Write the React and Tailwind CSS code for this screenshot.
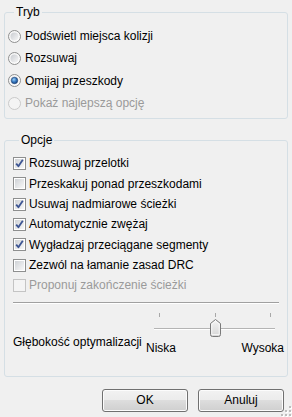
import { useState } from "react";

// Radio 13x13 w stylu Win7
function Radio({ checked, disabled }) {
  return (
    <svg width="13" height="13" viewBox="0 0 13 13" className="shrink-0">
      <defs>
        <linearGradient id="rOuter" x1="0" y1="0" x2="1" y2="1">
          <stop offset="0" stopColor="#f4f4f4" />
          <stop offset="1" stopColor="#ffffff" />
        </linearGradient>
        <linearGradient id="rInner" x1="0" y1="0" x2="1" y2="1">
          <stop offset="0" stopColor="#c9ccd1" />
          <stop offset="1" stopColor="#f7f7f7" />
        </linearGradient>
        <radialGradient id="rDot" cx="0.4" cy="0.35" r="0.7">
          <stop offset="0" stopColor="#9fd3f7" />
          <stop offset="0.5" stopColor="#3b7dc4" />
          <stop offset="1" stopColor="#15407c" />
        </radialGradient>
      </defs>
      <circle
        cx="6.5"
        cy="6.5"
        r="6"
        fill={disabled ? "#f4f4f4" : "url(#rOuter)"}
        stroke={disabled ? "#c9c9c9" : "#8e8f8f"}
      />
      {!disabled && <circle cx="6.5" cy="6.5" r="4" fill="url(#rInner)" />}
      {checked && <circle cx="6.5" cy="6.5" r="3.2" fill="url(#rDot)" stroke="#1b3f73" strokeWidth="0.6" />}
    </svg>
  );
}

function Check({ checked, disabled }) {
  return (
    <svg width="13" height="13" viewBox="0 0 13 13" className="shrink-0">
      <defs>
        <linearGradient id="cInner" x1="0" y1="0" x2="1" y2="1">
          <stop offset="0" stopColor="#cfd2d6" />
          <stop offset="1" stopColor="#f8f8f8" />
        </linearGradient>
      </defs>
      <rect
        x="0.5"
        y="0.5"
        width="12"
        height="12"
        fill={disabled ? "#f4f4f4" : "#ffffff"}
        stroke={disabled ? "#c4c4c4" : "#8e8f8f"}
      />
      {!disabled && <rect x="2" y="2" width="9" height="9" fill="url(#cInner)" />}
      {checked && (
        <path
          d="M3.2 6.6 L5.4 9.2 L9.8 2.8"
          fill="none"
          stroke="#3d5593"
          strokeWidth="1.8"
          strokeLinejoin="round"
        />
      )}
    </svg>
  );
}

function Button({ children }) {
  return (
    <button className="w-[86px] h-[23px] rounded-[3px] border border-[#707070] bg-[linear-gradient(to_bottom,#f2f2f2_0%,#ebebeb_50%,#dddddd_50%,#cfcfcf_100%)] shadow-[inset_0_0_0_1px_#fcfcfc] text-black">
      {children}
    </button>
  );
}

export default function App() {
  const [mode, setMode] = useState(2);
  const modes = ["Podświetl miejsca kolizji", "Rozsuwaj", "Omijaj przeszkody", "Pokaż najlepszą opcję"];
  const opts = [
    { label: "Rozsuwaj przelotki", on: true },
    { label: "Przeskakuj ponad przeszkodami", on: false },
    { label: "Usuwaj nadmiarowe ścieżki", on: true },
    { label: "Automatycznie zwężaj", on: true },
    { label: "Wygładzaj przeciągane segmenty", on: true },
    { label: "Zezwól na łamanie zasad DRC", on: false },
    { label: "Proponuj zakończenie ścieżki", on: false, disabled: true },
  ];

  return (
    <div className="w-[292px] h-[417px] bg-[#f0f0f0] relative overflow-hidden font-['Liberation_Sans',sans-serif] text-[12px] leading-[16px] text-black">
      <div className="pt-[4px] pl-[4px]">
        {/* TRYB */}
        <fieldset className="w-[284px] border border-[#d5dfe5] rounded-[3px] pt-[5px] pb-[4px] pl-[3px]">
          <legend className="ml-[6px] px-[2px]">Tryb</legend>
          {modes.map((m, i) => (
            <div
              key={m}
              onClick={() => i < 3 && setMode(i)}
              className="h-[22.33px] flex items-center gap-[4px]"
            >
              <Radio checked={mode === i} disabled={i === 3} />
              <span className={i === 3 ? "text-[#9a9a9a]" : ""}>{m}</span>
            </div>
          ))}
        </fieldset>

        {/* OPCJE */}
        <fieldset className="w-[284px] mt-[13px] border border-[#d5dfe5] rounded-[3px] pt-[5px] pb-[20px] px-[8px]">
          <legend className="ml-[6px] px-[2px]">Opcje</legend>
          {opts.map((o) => (
            <div key={o.label} className="h-[20.33px] flex items-center gap-[3px]">
              <Check checked={o.on} disabled={o.disabled} />
              <span className={o.disabled ? "text-[#9a9a9a]" : ""}>{o.label}</span>
            </div>
          ))}

          <div className="mt-[6px] h-[2px] border-t border-[#a0a0a0] border-b border-b-white" />

          <div className="mt-[8px] flex -mr-[5px]">
            <div className="flex-1 mt-[22px]">Głębokość optymalizacji</div>
            <div className="w-[138px]">
              <svg width="138" height="26" viewBox="0 0 138 26">
                <defs>
                  <linearGradient id="thumb" x1="0" y1="0" x2="0" y2="1">
                    <stop offset="0" stopColor="#f5f5f5" />
                    <stop offset="1" stopColor="#d6d6d6" />
                  </linearGradient>
                </defs>
                <line x1="13.5" y1="1" x2="13.5" y2="5" stroke="#a8a8a8" />
                <line x1="69.5" y1="1" x2="69.5" y2="5" stroke="#a8a8a8" />
                <line x1="124.5" y1="1" x2="124.5" y2="5" stroke="#a8a8a8" />
                <line x1="8" y1="16.5" x2="129" y2="16.5" stroke="#b4b4b4" />
                <line x1="8" y1="17.5" x2="129" y2="17.5" stroke="#ffffff" />
                <path
                  d="M64.5 11.5 L69.5 7.5 L74.5 11.5 V22.5 Q74.5 24.5 72.5 24.5 H66.5 Q64.5 24.5 64.5 22.5 Z"
                  fill="url(#thumb)"
                  stroke="#7a7a7a"
                />
                <path d="M65.8 12 L69.5 9 L73.2 12 V22.5 H65.8 Z" fill="none" stroke="#ffffff" strokeOpacity="0.7" />
              </svg>
              <div className="mt-[2px] flex justify-between">
                <span>Niska</span>
                <span>Wysoka</span>
              </div>
            </div>
          </div>
        </fieldset>
      </div>

      {/* PRZYCISKI */}
      <div className="mt-[12px] flex justify-end gap-[10px] pr-[8px]">
        <Button>OK</Button>
        <Button>Anuluj</Button>
      </div>

      {/* uchwyt zmiany rozmiaru */}
      <svg width="12" height="12" viewBox="0 0 12 12" className="absolute right-0 bottom-0">
        {[
          [9, 1],
          [9, 5],
          [5, 5],
          [9, 9],
          [5, 9],
          [1, 9],
        ].map(([x, y]) => (
          <g key={x + "-" + y}>
            <rect x={x + 1} y={y + 1} width="2" height="2" fill="#ffffff" />
            <rect x={x} y={y} width="2" height="2" fill="#bdbdbd" />
          </g>
        ))}
      </svg>
    </div>
  );
}
